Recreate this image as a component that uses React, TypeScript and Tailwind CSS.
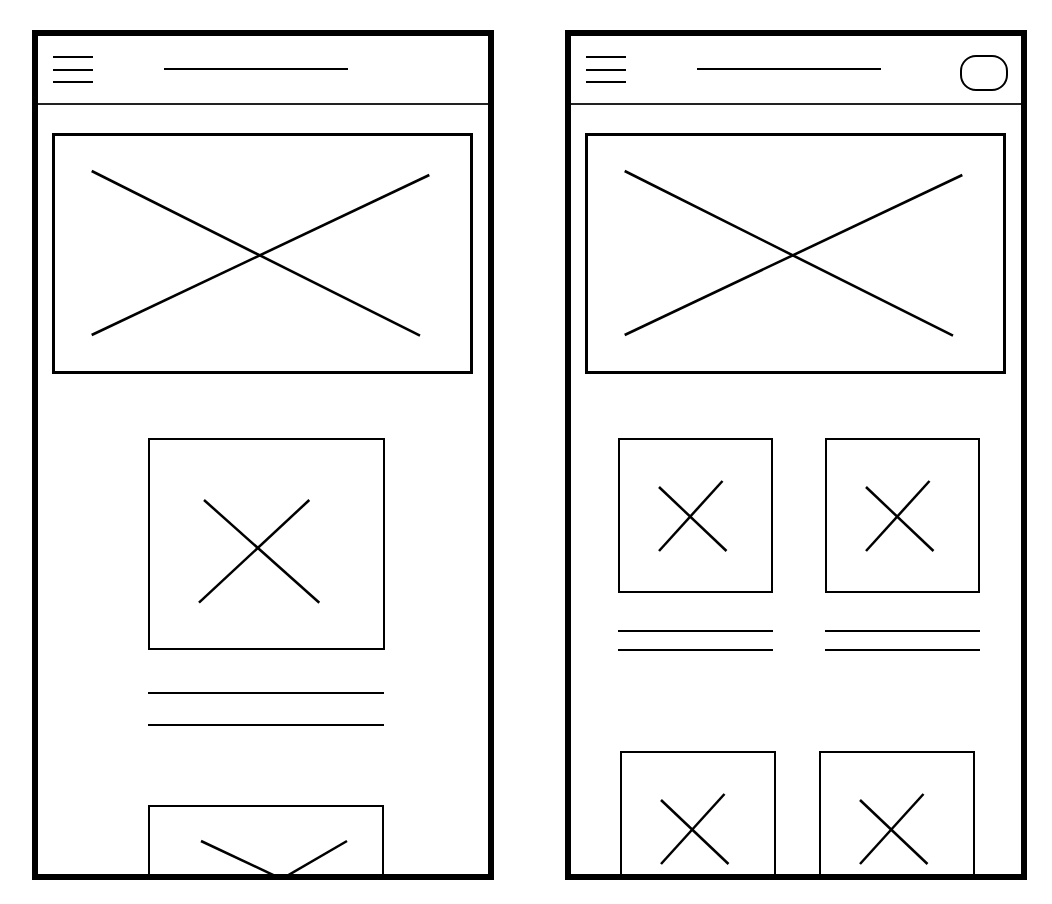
import React from "react";

function Hamburger() {
  return (
    <div className="ml-[15px] mt-[20px] flex flex-col w-[40px] shrink-0">
      <div className="h-[2px] bg-black" />
      <div className="h-[2px] bg-black mt-[11px]" />
      <div className="h-[2px] bg-black mt-[10px]" />
    </div>
  );
}

function Header({ pill }: { pill?: boolean }) {
  return (
    <div className="h-[69px] shrink-0 border-b-2 border-[#222] flex items-start">
      <Hamburger />
      <div className="ml-[71px] mt-[32px] h-[2px] w-[184px] bg-black shrink-0" />
      {pill && (
        <div className="ml-auto mr-[13px] mt-[19px] w-[48px] h-[36px] border-2 border-black rounded-[16px]" />
      )}
    </div>
  );
}

function Hero() {
  return (
    <div className="mt-[28px] ml-[14px] w-[421px] h-[241px] shrink-0 border-[3px] border-black">
      <svg className="block w-full h-full" viewBox="0 0 415 235">
        <line x1="36.7" y1="35" x2="365" y2="199.7" stroke="black" strokeWidth="2.6" />
        <line x1="36.7" y1="199" x2="374.3" y2="39" stroke="black" strokeWidth="2.6" />
      </svg>
    </div>
  );
}

function Tile({ w = "w-[155px]" }: { w?: string }) {
  return (
    <div className={`${w} h-[155px] shrink-0 border-2 border-black`}>
      <svg className="block w-[151px] h-[151px]" viewBox="0 0 151 151">
        <line x1="39" y1="47" x2="106.5" y2="111" stroke="black" strokeWidth="2.5" />
        <line x1="39" y1="111" x2="102.5" y2="41" stroke="black" strokeWidth="2.5" />
      </svg>
    </div>
  );
}

function TextLines({ gapTop, gap }: { gapTop: string; gap: string }) {
  return (
    <div className={`flex flex-col w-[155px] ${gapTop}`}>
      <div className="h-[2px] bg-black" />
      <div className={`h-[2px] bg-black ${gap}`} />
    </div>
  );
}

function LeftPhone() {
  return (
    <div className="w-[462px] h-[850px] shrink-0 border-[6px] border-black flex flex-col overflow-hidden bg-white">
      <Header />
      <Hero />
      <div className="ml-[110px] mt-[64px] w-[237px] h-[212px] shrink-0 border-2 border-black">
        <svg className="block w-full h-full" viewBox="0 0 233 208">
          <line x1="54" y1="60" x2="169.3" y2="162.7" stroke="black" strokeWidth="2.5" />
          <line x1="49" y1="162.7" x2="159.3" y2="60" stroke="black" strokeWidth="2.5" />
        </svg>
      </div>
      <div className="ml-[110px] mt-[42px] w-[236px] flex flex-col shrink-0">
        <div className="h-[2px] bg-black" />
        <div className="h-[2px] bg-black mt-[30px]" />
      </div>
      <div className="ml-[110px] mt-[79px] w-[236px] h-[160px] shrink-0 border-2 border-black">
        <svg className="block w-full h-full" viewBox="0 0 232 156">
          <line x1="51" y1="34" x2="263.5" y2="134" stroke="black" strokeWidth="2.5" />
          <line x1="197" y1="34" x2="25" y2="134" stroke="black" strokeWidth="2.5" />
        </svg>
      </div>
    </div>
  );
}

function RightPhone() {
  return (
    <div className="w-[462px] h-[850px] shrink-0 border-[6px] border-black flex flex-col overflow-hidden bg-white">
      <Header pill />
      <Hero />
      <div className="mt-[64px] ml-[47px] flex gap-[52px] shrink-0">
        <div className="flex flex-col">
          <Tile />
          <TextLines gapTop="mt-[37px]" gap="mt-[17px]" />
        </div>
        <div className="flex flex-col">
          <Tile />
          <TextLines gapTop="mt-[37px]" gap="mt-[17px]" />
        </div>
      </div>
      <div className="mt-[100px] ml-[49px] flex gap-[43px] shrink-0">
        <Tile w="w-[156px]" />
        <Tile w="w-[156px]" />
      </div>
    </div>
  );
}

export default function App() {
  return (
    <div className="w-[1052px] h-[904px] bg-white flex items-start gap-[71px] pl-[32px] pt-[30px] overflow-hidden">
      <LeftPhone />
      <RightPhone />
    </div>
  );
}
